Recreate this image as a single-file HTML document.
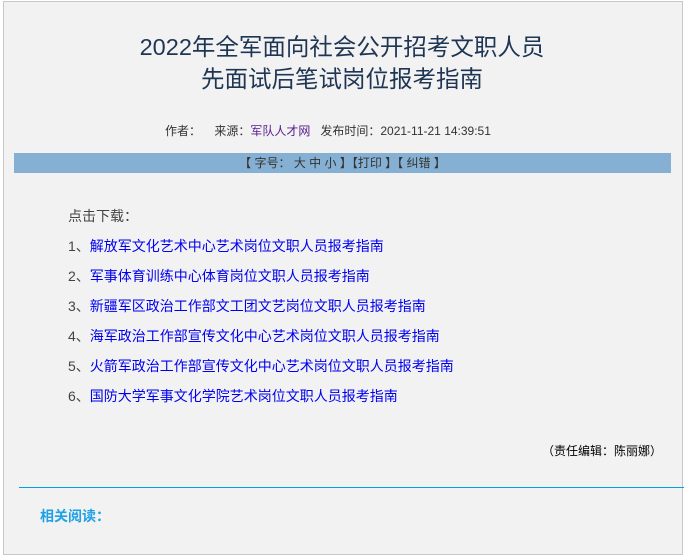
<!DOCTYPE html>
<html><head><meta charset="utf-8"><style>
body{margin:0;width:684px;height:558px;background:#fff;font-family:"Liberation Sans","Noto Sans CJK SC","WenQuanYi Zen Hei",sans-serif;overflow:hidden;position:relative}
.box{position:absolute;left:3px;top:1px;width:678px;height:552px;border:1px solid #c8c8c8;background:#f2f2f2}
.t{position:absolute;left:0;width:684px;text-align:center;color:#1f3554;font-size:23.5px;line-height:30px}
.meta{position:absolute;left:165px;top:122px;font-size:12px;color:#333;white-space:pre}
.meta a{color:#551a8b}
.bar{position:absolute;left:14px;top:153px;width:657px;height:20px;background:#85b0d3;text-align:center;font-size:12px;line-height:20px;color:#333;white-space:pre}
.l{position:absolute;left:68px;font-size:14px;color:#444;line-height:20px;white-space:nowrap}
.l span{color:#0000ee}
.ed{position:absolute;right:22px;top:442px;font-size:12px;color:#000}
.hr{position:absolute;left:19px;top:487px;width:665px;border-top:1px solid #00a0e9}
.rel{position:absolute;left:40px;top:506px;font-size:14px;font-weight:bold;color:#1ea0e6}
</style></head><body>
<div class="box"></div>
<div class="t" style="top:32px">2022年全军面向社会公开招考文职人员</div>
<div class="t" style="top:64px">先面试后笔试岗位报考指南</div>
<div class="meta">作者：    来源：<a>军队人才网</a>   发布时间：2021-11-21 14:39:51</div>
<div class="bar">【 字号： 大 中 小 】【打印 】【 纠错 】</div>
<div class="l" style="top:206px">点击下载：</div>
<div class="l" style="top:236px">1、<span>解放军文化艺术中心艺术岗位文职人员报考指南</span></div>
<div class="l" style="top:266px">2、<span>军事体育训练中心体育岗位文职人员报考指南</span></div>
<div class="l" style="top:296px">3、<span>新疆军区政治工作部文工团文艺岗位文职人员报考指南</span></div>
<div class="l" style="top:326px">4、<span>海军政治工作部宣传文化中心艺术岗位文职人员报考指南</span></div>
<div class="l" style="top:356px">5、<span>火箭军政治工作部宣传文化中心艺术岗位文职人员报考指南</span></div>
<div class="l" style="top:386px">6、<span>国防大学军事文化学院艺术岗位文职人员报考指南</span></div>
<div class="ed">（责任编辑：陈丽娜）</div>
<div class="hr"></div>
<div class="rel">相关阅读：</div>
</body></html>
